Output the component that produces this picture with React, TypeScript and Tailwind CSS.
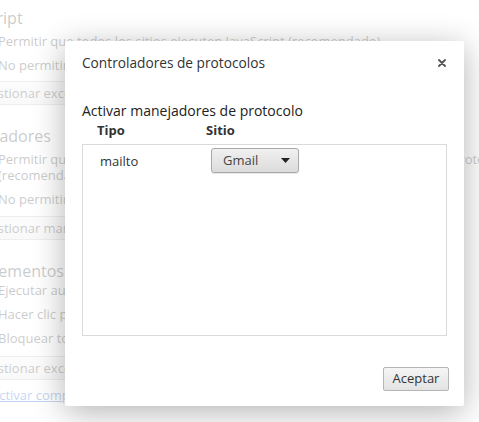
import React from "react";

const font = { fontFamily: '"Open Sans", "Noto Sans", sans-serif' };

function BgButton({ children }: { children: React.ReactNode }) {
  return (
    <div className="ml-[22px] h-[24px] w-[240px] border border-[#bdbdbd] rounded-[2px] bg-gradient-to-b from-[#f4f4f4] to-[#e6e6e6] pl-[8px] text-[13px] leading-[22px] text-[#333]">
      {children}
    </div>
  );
}

function Row({ children }: { children: React.ReactNode }) {
  return <div className="pl-[48px] text-[13px] leading-[24px] text-[#303030] whitespace-nowrap">{children}</div>;
}

export default function App() {
  return (
    <div className="relative w-[479px] h-[422px] overflow-hidden bg-white" style={font}>
      {/* background settings page */}
      <div className="ml-[-50px] pt-[7px] flex flex-col">
        <div className="text-[16px] leading-[22px] text-[#303030]">JavaScript</div>
        <Row>Permitir que todos los sitios ejecuten JavaScript (recomendado)</Row>
        <Row>No permitir que ningún sitio ejecute JavaScript</Row>
        <div className="mt-[4px]">
          <BgButton>Gestionar excepciones...</BgButton>
        </div>
        <div className="mt-[20px] ml-[-6px] text-[16px] leading-[22px] text-[#303030]">Controladores</div>
        <div className="pl-[48px] text-[13px] leading-[16px] pt-[4px] pb-[4px] text-[#303030] whitespace-nowrap">
          Permitir que los sitios se conviertan en controladores predeterminados de protocolos
          <br />
          (recomendado)
        </div>
        <Row>No permitir que ningún sitio gestione protocolos</Row>
        <div className="mt-[5px]">
          <BgButton>Gestionar manejadores...</BgButton>
        </div>
        <div className="mt-[22px] text-[16px] leading-[18px] text-[#303030]">Complementos</div>
        <div className="mt-[-2px] flex flex-col">
          <Row>Ejecutar automáticamente (recomendado)</Row>
          <Row>Hacer clic para reproducir</Row>
          <Row>Bloquear todos</Row>
        </div>
        <div className="mt-[6px]">
          <BgButton>Gestionar excepciones...</BgButton>
        </div>
        <div className="mt-[3px] pl-[41px] text-[13px] leading-[24px] text-[#1155cc] underline whitespace-nowrap">
          Activar complementos individuales...
        </div>
      </div>

      {/* overlay */}
      <div className="absolute inset-0 bg-white/75" />

      {/* dialog */}
      <div className="absolute left-[65px] top-[41px] w-[399px] h-[365px] bg-white rounded-[2px] shadow-[0_6px_32px_rgba(0,0,0,0.3)] flex flex-col">
        <div className="flex items-center justify-between pl-[17px] pr-[18px] pt-[12px]">
          <div className="text-[13.7px] leading-[20px] text-[#333]">Controladores de protocolos</div>
          <svg width="8" height="8" viewBox="0 0 8 8">
            <path d="M1 1 L7 7 M7 1 L1 7" stroke="#555" strokeWidth="1.8" strokeLinecap="round" />
          </svg>
        </div>
        <div className="pl-[17px] mt-[28px] text-[14px] leading-[20px] text-[#222]">
          Activar manejadores de protocolo
        </div>
        <div className="flex pl-[32px] text-[13px] leading-[18px] font-bold text-[#333]">
          <div className="w-[109px]">Tipo</div>
          <div>Sitio</div>
        </div>
        <div className="ml-[17px] mt-[5px] w-[365px] h-[192px] border border-[#dadada]">
          <div className="flex items-center pt-[3px]">
            <div className="w-[128px] pl-[17px] pt-[2px] text-[13px] text-[#333]">mailto</div>
            <div className="w-[88px] h-[25px] border border-[#a9a9a9] rounded-[3px] bg-gradient-to-b from-[#f0f0f0] to-[#dcdcdc] shadow-[0_1px_1px_rgba(0,0,0,0.1)] flex items-center justify-between pl-[11px] pr-[8px]">
              <span className="text-[13px] text-[#444]">Gmail</span>
              <svg width="9" height="5" viewBox="0 0 9 5">
                <path d="M0 0 L9 0 L4.5 5 Z" fill="#222" />
              </svg>
            </div>
          </div>
        </div>
        <div className="flex justify-end pr-[15px] mt-[31px]">
          <div className="w-[66px] h-[24px] border border-[#b5b5b5] rounded-[2px] bg-gradient-to-b from-[#f5f5f5] to-[#e3e3e3] flex items-center justify-center text-[13px] text-[#333]">
            Aceptar
          </div>
        </div>
      </div>
    </div>
  );
}
